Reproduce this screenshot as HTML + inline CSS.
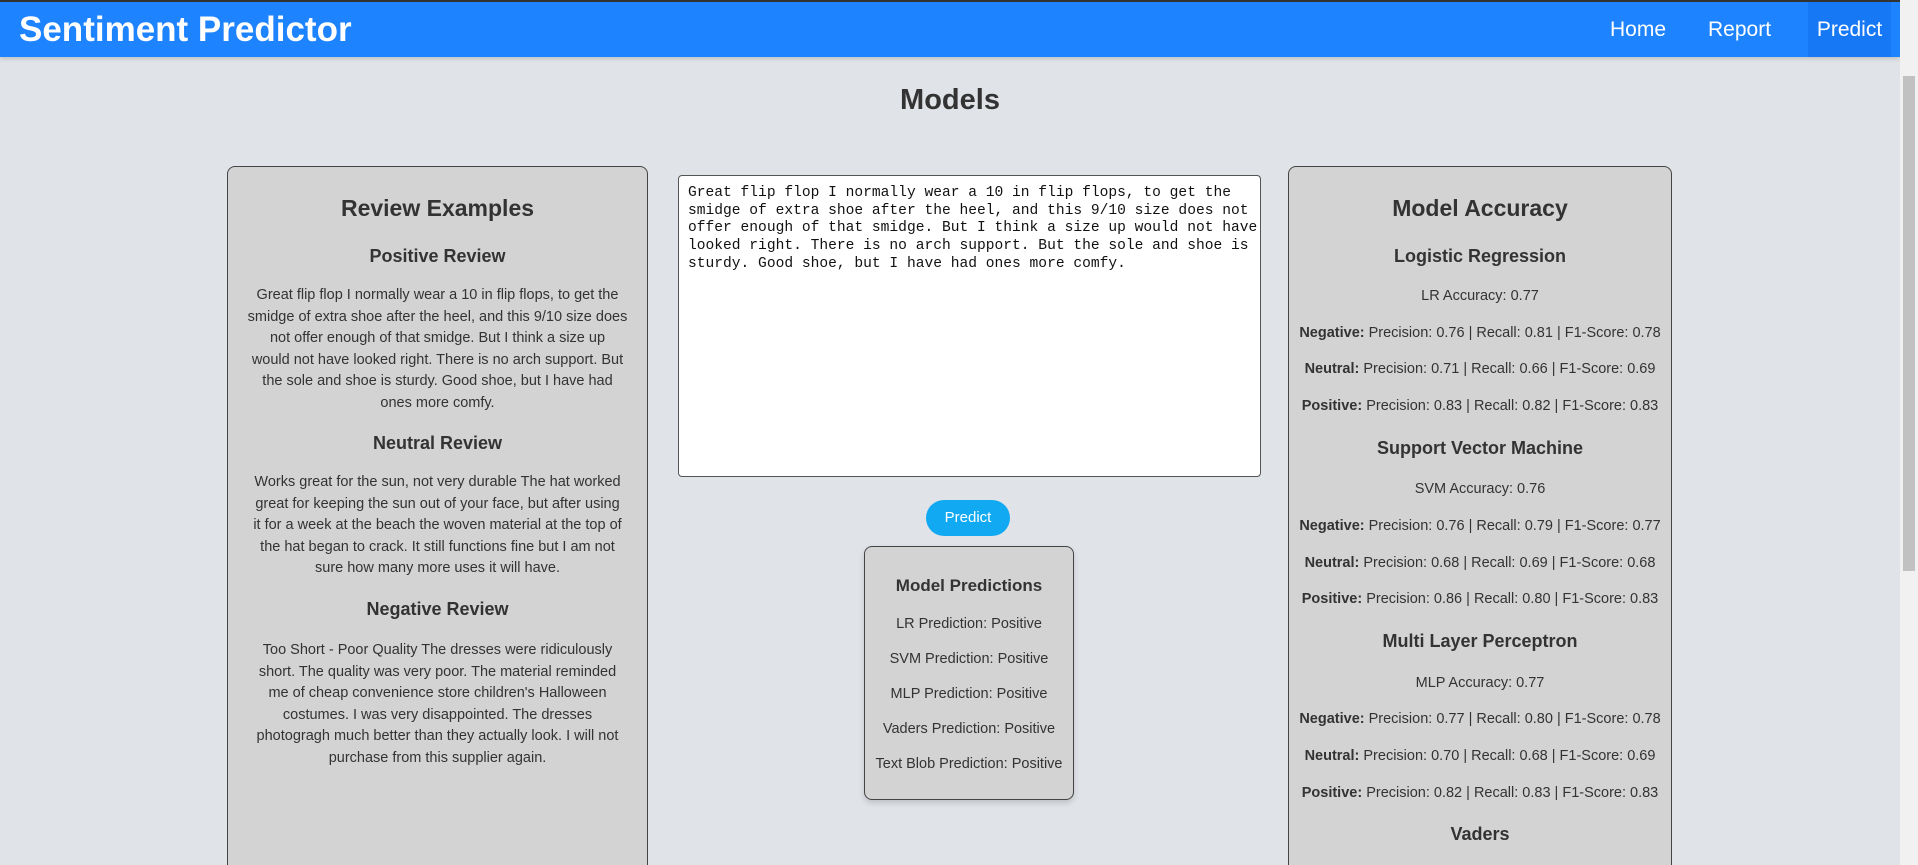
<!DOCTYPE html>
<html style="overflow:hidden;height:865px"><head><meta charset="utf-8"><style>
*{margin:0;padding:0;box-sizing:border-box}
body{width:1918px;height:865px;overflow:hidden;background:#e0e3e8;font-family:"Liberation Sans",sans-serif;color:#333;position:relative}
.hdr{position:absolute;left:0;top:0;width:1900px;height:57px;background:#1e83ff;border-top:2px solid #333;box-shadow:0 2px 4px rgba(0,0,0,.15)}
.brand{position:absolute;left:19px;top:6px;font-size:35px;font-weight:bold;color:#fff;line-height:44px}
.nav{position:absolute;top:0;height:55px;line-height:55px;color:#fff;font-size:21px}
.sb{position:absolute;left:1900px;top:0;width:18px;height:865px;background:#f1f1f1}
.thumb{position:absolute;left:1903px;top:76px;width:12px;height:495px;background:#c1c1c1}
.panel{position:absolute;background:#d3d3d3;border:1px solid #444;border-radius:8px}
.t{position:absolute;text-align:center;white-space:nowrap;height:22px;line-height:22px}
.h2{font-size:23px;font-weight:bold;height:30px;line-height:30px}
.h3{font-size:18px;font-weight:bold}
.p{font-size:14.5px}
</style></head><body>
<div class="hdr">
 <div class="brand">Sentiment Predictor</div>
 <div class="nav" style="left:1610px">Home</div>
 <div class="nav" style="left:1708px">Report</div>
 <div class="nav" style="left:1808px;width:83px;background:#1678f5;text-align:center">Predict</div>
</div>
<div class="sb"></div><div class="thumb"></div>
<div class="t" style="left:0;width:1900px;top:82px;height:36px;line-height:36px;font-size:29px;font-weight:bold">Models</div>

<div class="panel" style="left:227px;top:166px;width:421px;height:720px"></div>
<div class="t h2" style="left:227px;width:421px;top:193px">Review Examples</div>
<div class="t h3" style="left:227px;width:421px;top:245px">Positive Review</div>
<div class="t p" style="left:227px;width:421px;top:285px;height:auto;line-height:21.5px">Great flip flop I normally wear a 10 in flip flops, to get the<br>smidge of extra shoe after the heel, and this 9/10 size does<br>not offer enough of that smidge. But I think a size up<br>would not have looked right. There is no arch support. But<br>the sole and shoe is sturdy. Good shoe, but I have had<br>ones more comfy.</div>
<div class="t h3" style="left:227px;width:421px;top:432px">Neutral Review</div>
<div class="t p" style="left:227px;width:421px;top:472px;height:auto;line-height:21.5px">Works great for the sun, not very durable The hat worked<br>great for keeping the sun out of your face, but after using<br>it for a week at the beach the woven material at the top of<br>the hat began to crack. It still functions fine but I am not<br>sure how many more uses it will have.</div>
<div class="t h3" style="left:227px;width:421px;top:598px">Negative Review</div>
<div class="t p" style="left:227px;width:421px;top:640px;height:auto;line-height:21.5px">Too Short - Poor Quality The dresses were ridiculously<br>short. The quality was very poor. The material reminded<br>me of cheap convenience store children's Halloween<br>costumes. I was very disappointed. The dresses<br>photogragh much better than they actually look. I will not<br>purchase from this supplier again.</div>

<div style="position:absolute;left:678px;top:175px;width:583px;height:302px;background:#fff;border:1px solid #555;border-radius:4px;padding:9px 9px;font-family:'Liberation Mono',monospace;font-size:14.6px;line-height:17.7px;color:#111;white-space:nowrap;overflow:hidden">Great flip flop I normally wear a 10 in flip flops, to get the<br>smidge of extra shoe after the heel, and this 9/10 size does not<br>offer enough of that smidge. But I think a size up would not have<br>looked right. There is no arch support. But the sole and shoe is<br>sturdy. Good shoe, but I have had ones more comfy.</div>
<div style="position:absolute;left:926px;top:500px;width:84px;height:36px;border-radius:18px;background:#10a9f2;color:#fff;font-size:15px;text-align:center;line-height:36px">Predict</div>

<div class="panel" style="left:864px;top:546px;width:210px;height:254px;box-shadow:0 3px 6px rgba(0,0,0,.15)"></div>
<div class="t" style="left:864px;width:210px;top:575px;font-size:17px;font-weight:bold">Model Predictions</div>
<div class="t p" style="left:864px;width:210px;top:613px">LR Prediction: Positive</div>
<div class="t p" style="left:864px;width:210px;top:648px">SVM Prediction: Positive</div>
<div class="t p" style="left:864px;width:210px;top:683px">MLP Prediction: Positive</div>
<div class="t p" style="left:864px;width:210px;top:718px">Vaders Prediction: Positive</div>
<div class="t p" style="left:864px;width:210px;top:753px">Text Blob Prediction: Positive</div>

<div class="panel" style="left:1288px;top:166px;width:384px;height:720px"></div>
<div class="t h2" style="left:1288px;width:384px;top:193px">Model Accuracy</div>
<div class="t h3" style="left:1288px;width:384px;top:245px">Logistic Regression</div>
<div class="t p" style="left:1288px;width:384px;top:285px">LR Accuracy: 0.77</div>
<div class="t p" style="left:1288px;width:384px;top:322px"><b>Negative:</b> Precision: 0.76 | Recall: 0.81 | F1-Score: 0.78</div>
<div class="t p" style="left:1288px;width:384px;top:358px"><b>Neutral:</b> Precision: 0.71 | Recall: 0.66 | F1-Score: 0.69</div>
<div class="t p" style="left:1288px;width:384px;top:395px"><b>Positive:</b> Precision: 0.83 | Recall: 0.82 | F1-Score: 0.83</div>
<div class="t h3" style="left:1288px;width:384px;top:437px">Support Vector Machine</div>
<div class="t p" style="left:1288px;width:384px;top:478px">SVM Accuracy: 0.76</div>
<div class="t p" style="left:1288px;width:384px;top:515px"><b>Negative:</b> Precision: 0.76 | Recall: 0.79 | F1-Score: 0.77</div>
<div class="t p" style="left:1288px;width:384px;top:552px"><b>Neutral:</b> Precision: 0.68 | Recall: 0.69 | F1-Score: 0.68</div>
<div class="t p" style="left:1288px;width:384px;top:588px"><b>Positive:</b> Precision: 0.86 | Recall: 0.80 | F1-Score: 0.83</div>
<div class="t h3" style="left:1288px;width:384px;top:630px">Multi Layer Perceptron</div>
<div class="t p" style="left:1288px;width:384px;top:672px">MLP Accuracy: 0.77</div>
<div class="t p" style="left:1288px;width:384px;top:708px"><b>Negative:</b> Precision: 0.77 | Recall: 0.80 | F1-Score: 0.78</div>
<div class="t p" style="left:1288px;width:384px;top:745px"><b>Neutral:</b> Precision: 0.70 | Recall: 0.68 | F1-Score: 0.69</div>
<div class="t p" style="left:1288px;width:384px;top:782px"><b>Positive:</b> Precision: 0.82 | Recall: 0.83 | F1-Score: 0.83</div>
<div class="t h3" style="left:1288px;width:384px;top:823px">Vaders</div>
</body></html>
